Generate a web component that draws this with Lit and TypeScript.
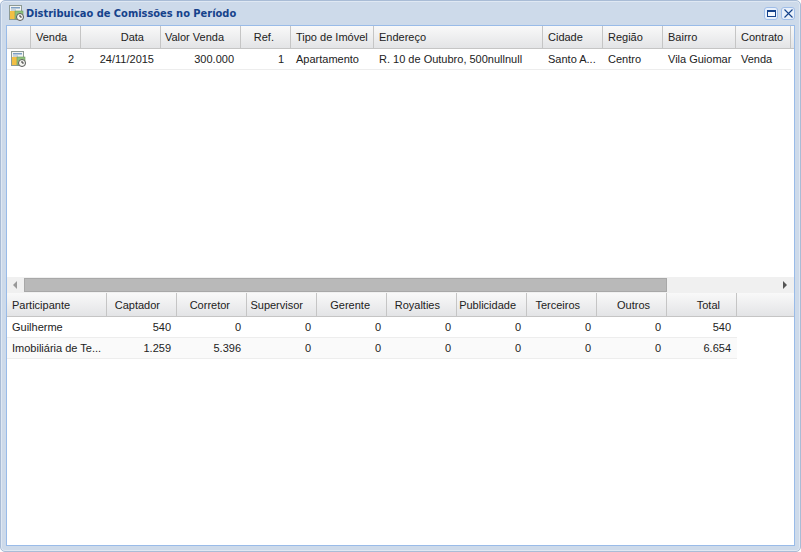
import { LitElement, html, css, svg } from "lit";
import { customElement } from "lit/decorators.js";

type Col = { t: string; w: number; a?: string; ha?: string; pr?: number };
const top: Col[] = [
  { t: "", w: 24 },
  { t: "Venda", w: 50, a: "r", ha: "l" },
  { t: "Data", w: 80, a: "r", ha: "r", pr: 16 },
  { t: "Valor Venda", w: 80, a: "r", ha: "r", pr: 16 },
  { t: "Ref.", w: 50, a: "r", ha: "r", pr: 16 },
  { t: "Tipo de Imóvel", w: 83 },
  { t: "Endereço", w: 169 },
  { t: "Cidade", w: 60 },
  { t: "Região", w: 60 },
  { t: "Bairro", w: 73 },
  { t: "Contrato", w: 55 },
];
const topRow = ["", "2", "24/11/2015", "300.000", "1", "Apartamento", "R. 10 de Outubro, 500nullnull", "Santo A...", "Centro", "Vila Guiomar", "Venda"];
const bot: Col[] = [
  { t: "Participante", w: 100 },
  { t: "Captador", w: 70, a: "r", ha: "r", pr: 16 },
  { t: "Corretor", w: 70, a: "r", ha: "r", pr: 16 },
  { t: "Supervisor", w: 70, a: "r", ha: "r", pr: 13 },
  { t: "Gerente", w: 70, a: "r", ha: "r", pr: 16 },
  { t: "Royalties", w: 70, a: "r", ha: "r", pr: 16 },
  { t: "Publicidade", w: 70, a: "r", ha: "r", pr: 10 },
  { t: "Terceiros", w: 70, a: "r", ha: "r", pr: 16 },
  { t: "Outros", w: 70, a: "r", ha: "r", pr: 16 },
  { t: "Total", w: 70, a: "r", ha: "r", pr: 16 },
];
const botRows = [
  ["Guilherme", "540", "0", "0", "0", "0", "0", "0", "0", "540"],
  ["Imobiliária de Te...", "1.259", "5.396", "0", "0", "0", "0", "0", "0", "6.654"],
];

const icon = svg`<svg class="ico" viewBox="0 0 16 16" width="16" height="16">
  <rect x="0.5" y="0.5" width="12" height="14" fill="#f2f4f2" stroke="#8d9a94"/>
  <rect x="2" y="2" width="9" height="1.5" fill="#7d9fc4"/>
  <rect x="2" y="4.5" width="5" height="1" fill="#9db0c4"/>
  <rect x="1" y="6" width="5" height="8" fill="#f2bf45"/>
  <rect x="6" y="6" width="8" height="8" fill="#8fc27c" stroke="#6f9a60" stroke-width=".6"/>
  <circle cx="11" cy="12" r="3.500" fill="#f6f6f2" stroke="#5a5a5a"/>
  <path d="M11 10v2h1.800" fill="none" stroke="#333"/>
</svg>`;

@customElement("app-root")
export class AppRoot extends LitElement {
  static styles = css`
    :host { display: block; width: 801px; height: 552px; font-family: "Liberation Sans", sans-serif; font-size: 11px; color: #222; overflow: hidden; }
    .win { box-sizing: border-box; width: 801px; height: 552px; background: #cddaea; border: 1px solid #a9bcd6; border-radius: 5px; display: flex; flex-direction: column; padding: 0 5px 5px 5px; box-shadow: inset 0 0 0 1px #dfe8f3; }
    .title { height: 24px; display: flex; align-items: center; flex: none; padding: 0 0 0 3px; box-sizing: border-box; }
    .title .ico { margin-right: 1px; }
    .title b { flex: 1; font-family: "DejaVu Sans", sans-serif; font-size: 9.900px; color: #15428b; font-weight: bold; white-space: nowrap; }
    .btn { width: 14px; height: 13px; box-sizing: border-box; border: 1px solid #9fbde8; border-radius: 3px; background: #e8f0fb; margin-left: 3px; display: flex; align-items: center; justify-content: center; }
    .body { flex: 1; background: #fff; border: 1px solid #99bbe8; display: flex; flex-direction: column; min-height: 0; }
    .head { display: flex; flex: none; background: linear-gradient(#f9f9f9, #e3e4e6); border-bottom: 1px solid #c5c5c5; }
    .h1 { height: 22px; }
    .h2 { height: 23px; }
    .hc { box-sizing: border-box; flex: none; border-right: 1px solid #c5c5c5; padding: 0 5px; display: flex; align-items: center; white-space: nowrap; overflow: hidden; }
    .hc.r { justify-content: flex-end; }
    .rest { flex: 1; }
    .row { display: flex; height: 21px; box-sizing: border-box; border-bottom: 1px solid #ededed; flex: none; width: max-content; }
    .row.alt { background: #fafafa; }
    .c { box-sizing: border-box; flex: none; padding: 0 5px; display: flex; align-items: center; white-space: nowrap; overflow: hidden; }
    .c.r { justify-content: flex-end; padding-right: 6px; }
    .top .c.r { padding-right: 7px; }
    .c.ic { padding: 0 0 0 4px; }
    .top { flex: none; height: 251px; }
    .sb { flex: none; height: 16px; background: #f0f0f0; display: flex; align-items: center; }
    .arrow { width: 17px; flex: none; display: flex; justify-content: center; }
    .thumb { box-sizing: border-box; width: 643px; height: 14px; background: #b9b9b9; border: 1px solid #a8a8a8; flex: none; }
    .fill { flex: 1; }
    .bottom { flex: 1; }
  `;

  render() {
    return html`<div class="win">
      <div class="title">${icon}<b>Distribuicao de Comissões no Período</b>
        <span class="btn"><svg width="9" height="7" viewBox="0 0 9 7"><rect x=".5" y=".5" width="8" height="6" fill="#f4f8fd" stroke="#15428b"/><rect x="0" y="0" width="9" height="2" fill="#15428b"/></svg></span>
        <span class="btn"><svg width="9" height="9" viewBox="0 0 9 9"><path d="M.5 .5l8 8M8.500 .5l-8 8" stroke="#15428b" stroke-width="1.100"/></svg></span>
      </div>
      <div class="body">
        <div class="top">
          <div class="head h1">
            ${top.map((c) => html`<div class="hc ${c.ha ?? ""}" style="width:${c.w}px;${c.pr ? `padding-right:${c.pr}px` : ""}">${c.t}</div>`)}
            <div class="rest"></div>
          </div>
          <div class="row">
            ${top.map((c, i) => i === 0
              ? html`<div class="c ic" style="width:${c.w}px">${icon}</div>`
              : html`<div class="c ${c.a ?? ""}" style="width:${c.w}px">${topRow[i]}</div>`)}
          </div>
        </div>
        <div class="sb">
          <div class="arrow"><svg width="5" height="8" viewBox="0 0 5 8"><path d="M4 0v8L0 4z" fill="#999"/></svg></div>
          <div class="thumb"></div>
          <div class="fill"></div>
          <div class="arrow"><svg width="5" height="8" viewBox="0 0 5 8"><path d="M0 0v8l4-4z" fill="#555"/></svg></div>
        </div>
        <div class="bottom">
          <div class="head h2">
            ${bot.map((c) => html`<div class="hc ${c.ha ?? ""}" style="width:${c.w}px;${c.pr ? `padding-right:${c.pr}px` : ""}">${c.t}</div>`)}
            <div class="rest"></div>
          </div>
          ${botRows.map((r, ri) => html`<div class="row ${ri ? "alt" : ""}">
            ${bot.map((c, i) => html`<div class="c ${c.a ?? ""}" style="width:${c.w}px">${r[i]}</div>`)}
          </div>`)}
        </div>
      </div>
    </div>`;
  }
}
